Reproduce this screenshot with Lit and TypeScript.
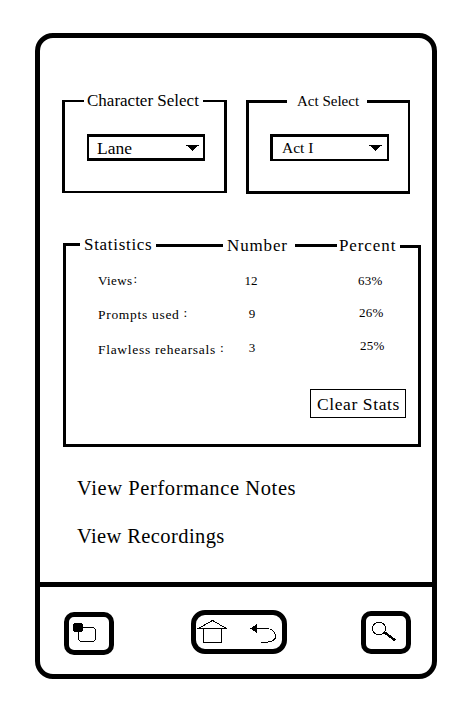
import { LitElement, html, css, svg } from "lit";
import { customElement } from "lit/decorators.js";

const STATS = [
  { label: "Views", colonGap: "tight", number: "12", percent: "63%" },
  { label: "Prompts used", colonGap: "wide", number: "9", percent: "26%" },
  { label: "Flawless rehearsals", colonGap: "wide", number: "3", percent: "25%" },
];

@customElement("app-root")
export class AppRoot extends LitElement {
  static styles = css`
    :host {
      display: flow-root;
      width: 476px;
      height: 718px;
      overflow: hidden;
      background: #fff;
      color: #000;
      font-family: "Liberation Serif", "Times New Roman", serif;
    }
    * { box-sizing: border-box; }
    .phone {
      display: flex;
      flex-direction: column;
      width: 402px;
      height: 646px;
      margin: 33px 0 0 35px;
      border: 5px solid #000;
      border-radius: 18px;
    }
    .screen { height: 544px; padding: 62px 0 0 22px; }
    .text { white-space: nowrap; line-height: 20px; }
    .pickers { display: flex; align-items: flex-start; gap: 19px; }
    .legend { display: flex; align-items: flex-start; height: 3px; }
    .line { height: 3px; background: #000; flex: none; }
    .legend .text { flex: none; font-size: 17px; }

    .character { width: 165px; }
    .character .legend { height: 2px; }
    .character .line { height: 2px; }
    .character .line.start { width: 22px; }
    .character .line.end { width: 24px; }
    .character .legend .text { width: 119px; padding-left: 3px; margin-top: -9px; }
    .character .body {
      height: 91px;
      border: solid #000;
      border-width: 0 3px 2px;
      padding: 32px 0 0 22px;
    }
    .act { width: 164px; }
    .act .line.start { width: 41px; }
    .act .line.end { width: 43px; }
    .act .legend .text { width: 80px; padding-left: 10px; margin-top: -9px; font-size: 15px; }
    .act .body {
      height: 91px;
      border: solid #000;
      border-width: 0 2px 3px 3px;
      padding: 31px 0 0 21px;
    }
    .select {
      display: flex;
      justify-content: space-between;
      align-items: flex-start;
      width: 118px;
      height: 27px;
      border: solid #000;
      border-width: 3px 2px;
      font-size: 17.5px;
    }
    .select .text { margin: 1px 0 0 8px; }
    .select svg { margin: 8px 4px 0 0; }
    .act .select { width: 119px; border-width: 3px 2px 2px 3px; font-size: 15.5px; }
    .act .select .text { margin: 1px 0 0 9px; }
    .act .select svg { margin-right: 5px; }

    .stats { width: 358px; margin: 49px 0 0 1px; }
    .stats .legend { height: 5px; }
    .stats .one { width: 17px; height: 5px; background: none; border: solid #000; border-width: 3px 0 0 3px; }
    .stats .two { width: 67px; margin-top: 1px; }
    .stats .three { width: 42px; margin-top: 1px; }
    .stats .four { width: 21px; margin-top: 2px; }
    .stats .statistics { width: 76px; padding-left: 4px; margin-top: -8px; letter-spacing: 0.7px; }
    .stats .number { width: 72px; padding-left: 4px; margin-top: -7px; letter-spacing: 0.85px; }
    .stats .percent { width: 63px; padding-left: 2px; margin-top: -7px; letter-spacing: 0.9px; }
    .stats .body {
      height: 199px;
      border: solid #000;
      border-width: 0 3px 3px;
      padding-top: 23px;
    }
    .columns { display: flex; align-items: flex-start; font-size: 13px; height: 117px; }
    .column { display: flex; flex-direction: column; }
    .labels { width: 161px; padding-left: 32px; gap: 14px; font-size: 13.5px; letter-spacing: 0.7px; }
    .labels .text:first-child { font-size: 13px; letter-spacing: 0.4px; }
    .labels .text:last-child { padding-top: 1px; }
    .numbers { width: 50px; align-items: center; gap: 13.4px; }
    .numbers .text:first-child { margin-left: -2px; }
    .percents { padding-left: 81px; gap: 12.4px; letter-spacing: 0.3px; }
    .percents .text:nth-child(2) { margin-left: 1px; }
    .percents .text:nth-child(3) { margin-left: 2px; }
    .colon { display: inline-block; line-height: 12px; transform: translateY(-2px); letter-spacing: 0; }
    .colon.tight { margin-left: 1px; }
    .colon.wide { margin-left: 4px; }
    .clear {
      display: block;
      width: 96px;
      height: 29px;
      margin: 1px 0 0 244px;
      border: 1px solid #000;
      padding: 4px 0 0 6px;
      font-size: 17.5px;
      letter-spacing: 0.6px;
    }
    .links {
      display: flex;
      flex-direction: column;
      gap: 24px;
      margin: 29px 0 0 15px;
      font-size: 20.5px;
      letter-spacing: 0.6px;
    }
    .links .text { line-height: 24px; }
    .links .text:last-child { letter-spacing: 0.4px; }

    .nav {
      display: flex;
      align-items: flex-start;
      justify-content: space-between;
      flex: 1;
      border-top: 5px solid #000;
      padding: 23px 21px 0 24px;
    }
    .key { width: 50px; height: 43px; border: 5px solid #000; border-radius: 10px; }
    .key svg { display: block; }
    .menu { margin-top: 2px; }
    .home { width: 96px; height: 44px; margin-left: 2px; border-radius: 14px; }
    .search { margin-top: 1px; }
  `;

  private caret() {
    return html`<svg width="13" height="6" viewBox="0 0 13 6" shape-rendering="crispEdges">
      ${svg`<path d="M0 0H13V1H11V2H10V3H9V4H8V5H7V6H6V5H5V4H4V3H3V2H2V1H0Z"/>`}
    </svg>`;
  }

  render() {
    return html`
      <div class="phone">
        <main class="screen">
          <div class="pickers">
            <section class="character">
              <div class="legend">
                <span class="line start"></span><span class="text">Character Select</span><span class="line end"></span>
              </div>
              <div class="body">
                <div class="select"><span class="text">Lane</span>${this.caret()}</div>
              </div>
            </section>
            <section class="act">
              <div class="legend">
                <span class="line start"></span><span class="text">Act Select</span><span class="line end"></span>
              </div>
              <div class="body">
                <div class="select"><span class="text">Act I</span>${this.caret()}</div>
              </div>
            </section>
          </div>

          <section class="stats">
            <div class="legend">
              <span class="line one"></span><span class="text statistics">Statistics</span>
              <span class="line two"></span><span class="text number">Number</span>
              <span class="line three"></span><span class="text percent">Percent</span>
              <span class="line four"></span>
            </div>
            <div class="body">
              <div class="columns">
                <div class="column labels">
                  ${STATS.map((s) => html`<span class="text">${s.label}<span class="colon ${s.colonGap}">:</span></span>`)}
                </div>
                <div class="column numbers">${STATS.map((s) => html`<span class="text">${s.number}</span>`)}</div>
                <div class="column percents">${STATS.map((s) => html`<span class="text">${s.percent}</span>`)}</div>
              </div>
              <div class="clear text">Clear Stats</div>
            </div>
          </section>

          <div class="links">
            <span class="text">View Performance Notes</span>
            <span class="text">View Recordings</span>
          </div>
        </main>

        <nav class="nav">
          <div class="key menu">
            <svg width="40" height="33" viewBox="69 617 40 33" shape-rendering="crispEdges">
              <path d="M80.5 627.5H93.5L95.5 629.5V639.5L93.5 641.5H80.5L78.5 639.5V627.5Z" fill="none" stroke="#000" />
              <path d="M74 623H82V624H83V631H82V632H74V631H73V624H74Z" />
            </svg>
          </div>
          <div class="key home">
            <svg width="86" height="34" viewBox="196 615 86 34" fill="none" stroke="#000" shape-rendering="crispEdges">
              <path d="M198.5 628.5L212.5 620.5L226.5 628.5Z" />
              <path d="M203.5 628.5V642.5H221.5V628.5" />
              <path d="M256 628.5H267.5C272 629 275.5 632 275.5 636.5C275.5 640.5 271 642.5 261 642.5" />
              <path d="M250 628.5L257 624V633Z" fill="#000" stroke="none" />
            </svg>
          </div>
          <div class="key search">
            <svg width="40" height="33" viewBox="366 616 40 33" fill="none" stroke="#000" shape-rendering="crispEdges">
              <circle cx="379" cy="628.5" r="6.5" />
              <path d="M384.5 632.5L395.5 640.5" stroke-width="2.4" />
            </svg>
          </div>
        </nav>
      </div>
    `;
  }
}
